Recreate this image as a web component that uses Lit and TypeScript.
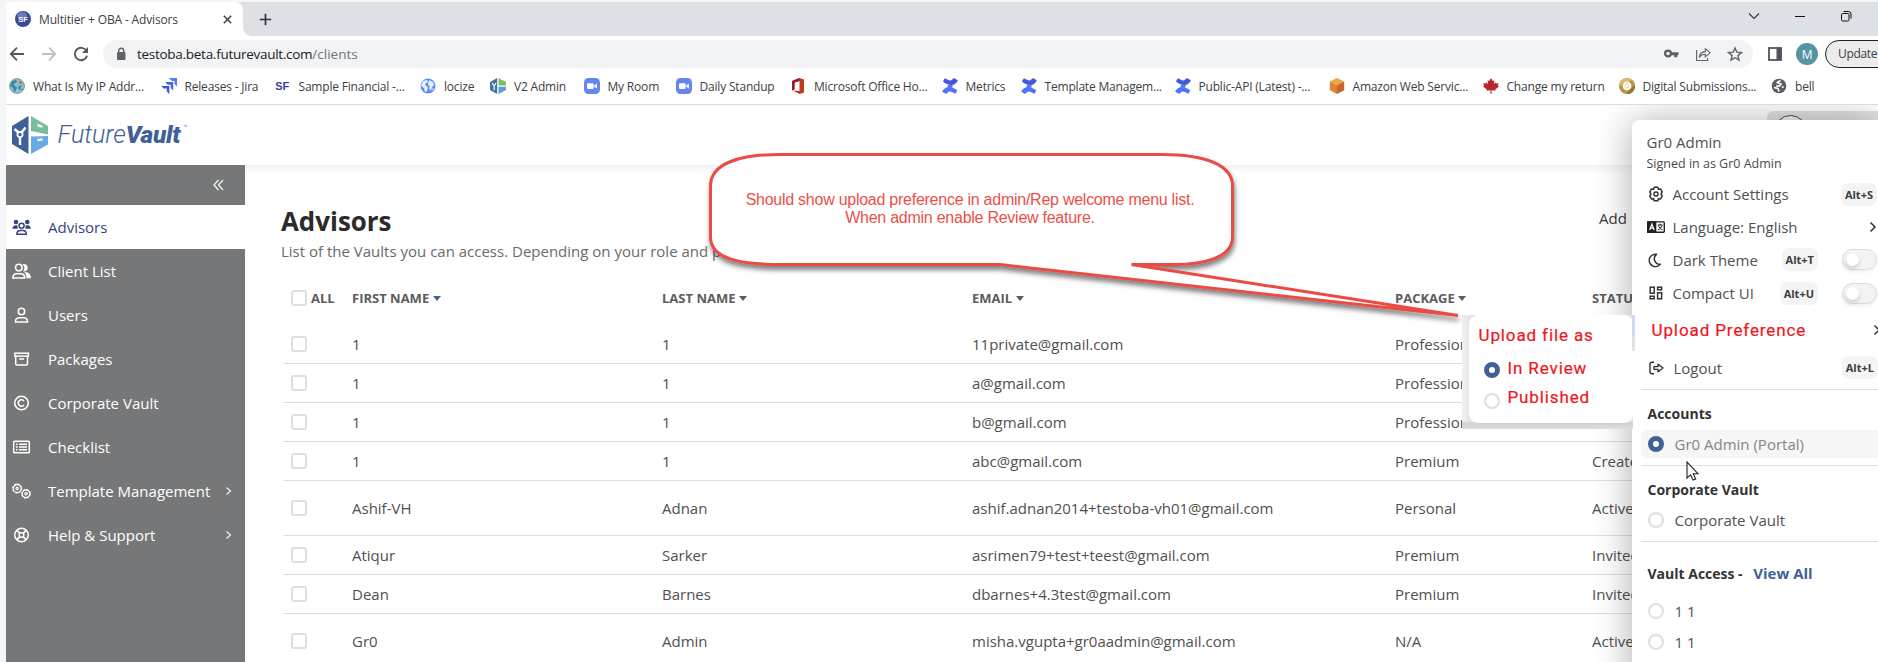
import { LitElement, html, svg, css, nothing } from "lit";
import { customElement } from "lit/decorators.js";
import { classMap } from "lit/directives/class-map.js";
import { styleMap } from "lit/directives/style-map.js";

const globe = (a: string, b: string) => svg`
  <circle cx="8" cy="8" r="7.5" fill=${a}/>
  <path d="M3 3l4-1 1 2-3 2 1 2 2 1-1 4-2 1-1-4-3-2zM9 2l4 2 1 3-2 2-1 4-2-3 1-2-2-1zM12 11l2-1-1 3z" fill=${b}/>`;
const zoomIcon = svg`
  <rect width="16" height="16" rx="4.5" fill="#6685f2"/>
  <rect x="3" y="5.3" width="6.6" height="5.6" rx="1.2" fill="#fff"/>
  <path d="M10.2 7.4L13 5.6v5L10.2 8.8z" fill="#fff"/>`;
const confluence = svg`
  <path d="M1 3.6L2.2 1q.5-.9 1.4-.4C6 2 8.500 3.300 10 1.800L11.200.6q.8-.6 1.600 0l2.600 1.400q.6.5.1 1.200C13 7 9 8.200 5 6 3.500 5.300 2 5 1 3.600z" fill="#4459d9"/>
  <path d="M15.200 12.400L14 15q-.5.900-1.400.4C10 14 7.500 12.700 6 14.200l-1.200 1.200q-.8.600-1.600 0L.6 14q-.6-.5-.1-1.200C3 9 7 7.800 11 10c1.500.700 3 1 4.200 2.400z" fill="#5273f8"/>
  <path d="M6 6.200q2 1.800 4.500.3L10.500 9.800Q7.500 8.600 5.500 9.600z" fill="#5570f0"/>`;

const FAV: Record<string, unknown> = {
  ip: svg`${globe("#8cc7e0", "#3f86a8")}<circle cx="8" cy="8" r="7.400" fill="none" stroke="#74a55c" stroke-width="1"/><circle cx="11" cy="5" r="3" fill="#a9b2b6"/><circle cx="11.500" cy="4.500" r="1" fill="#8a3d30"/>`,
  jira: svg`<path d="M8 0h8v8.500l-2.500-2.500V3H11z" fill="#5878fb"/><path d="M4.200 4h8v8.500L9.700 10V6.700H6.700z" fill="#4365ec"/><path d="M.3 8h8v8L5.800 13.500V10.600H2.600z" fill="#3c56e0"/>`,
  sf: svg`<text x="7.300" y="12" text-anchor="middle" class="sf">SF</text>`,
  loc: globe("#5b8eec", "#e6f0ff"),
  v2: svg`<path d="M7.200 0v16L0 12V4z" fill="#4a6fa5"/><path d="M8.500 0L16 4v3.500H8.500z" fill="#7cc05c"/><path d="M8.500 8.700H16V12l-7.500 4z" fill="#5d9bd8"/><path d="M2 5l2.200 3L6 5M4.200 8v4" stroke="#fff" stroke-width="1.200" fill="none"/>`,
  zoom: zoomIcon,
  office: svg`<path d="M9.500 0L2 3v9.500l2.500-1.200V4.500l5-1.500v10L2.800 12.500 9.500 16l4.500-1.500V1.500z" fill="#c23a1e"/><path d="M2 3L9.500 0v3l-5 1.500v6.800L2 12.500z" fill="#8c1e35"/>`,
  conf: confluence,
  aws: svg`<path d="M8 0l7.200 3.500L8 7.200.8 3.500z" fill="#eba745"/><path d="M.8 3.500L8 7.200V16L.8 12.300z" fill="#dd8539"/><path d="M15.200 3.500L8 7.200V16l7.200-3.700z" fill="#cc6130"/>`,
  leaf: svg`<path d="M8 0l1.700 3 1.700-.8-.5 4 2-1.900.4 1.300 2.500-.3-1 2.400 1.200.7-3.800 3 .4 1.400-4-.6V16h-1.100v-3.800l-4 .6.400-1.400-3.900-3 1.200-.7-1-2.400 2.500.3.400-1.300 2 1.900-.5-4L6.300 3z" fill="#b6272c"/>`,
  gold: svg`<circle cx="8" cy="8" r="8" fill="#b99545"/><path d="M0 8a8 8 0 0 1 13-6L8 4z" fill="#d8bd72"/><path d="M16 7a8 8 0 0 1-9 9l4-5z" fill="#97752c"/><circle cx="8" cy="8" r="4.400" fill="#fff"/><path d="M8 4.500l2 3.500a2 2 0 1 1-4 0z" fill="#fffdf5" stroke="#c9a95a" stroke-width=".6"/>`,
  bell: svg`<circle cx="8" cy="8" r="7.300" fill="#5b5f64"/><path d="M9.500 2.500L6.500 4.500l3.500 1.500-1.500 2H5M3 9.500l4 1 1 3M11 9.500l1.500-1" fill="none" stroke="#fff" stroke-width="1.700"/>`,
};

const BOOKMARKS: [string, string, number][] = [
  ["ip", "What Is My IP Addr...", 151.5],
  ["jira", "Releases - Jira", 114],
  ["sf", "Sample Financial -...", 145.500],
  ["loc", "locize", 70],
  ["v2", "V2 Admin", 93.500],
  ["zoom", "My Room", 92],
  ["zoom", "Daily Standup", 114.500],
  ["office", "Microsoft Office Ho...", 151.500],
  ["conf", "Metrics", 79],
  ["conf", "Template Managem...", 154],
  ["conf", "Public-API (Latest) -...", 154],
  ["aws", "Amazon Web Servic...", 154],
  ["leaf", "Change my return", 136],
  ["gold", "Digital Submissions...", 152.500],
  ["bell", "bell", 60],
];

const NAV: [string, string, unknown, boolean][] = [
  ["Advisors", "active", svg`<g fill="currentColor"><circle cx="4" cy="3" r="2.300"/><circle cx="15.300" cy="3" r="2.300"/><path d="M.4 9.800C.4 7.500 1.800 6.200 3.800 6.200h1.500l.5 3.600zM18.800 9.800c0-2.300-1.400-3.600-3.400-3.600h-1.500l-.5 3.600z"/></g><circle cx="9.600" cy="6.800" r="2.500" fill="none" stroke="currentColor" stroke-width="1.500"/><path d="M4.900 15.200c0-2.300 1.300-3.600 3.300-3.600h2.800c2 0 3.300 1.300 3.300 3.600z" fill="none" stroke="currentColor" stroke-width="1.500"/>`, false],
  ["Client List", "", svg`<circle cx="6.800" cy="4.500" r="3.300" fill="none" stroke="currentColor" stroke-width="1.600"/><path d="M.9 15c0-2.900 1.700-4.200 4-4.200h3.800c2.300 0 4 1.300 4 4.200z" fill="none" stroke="currentColor" stroke-width="1.600"/><path d="M10.500 1.200a3.800 3.800 0 1 1 .6 7.200 5.500 5.500 0 0 0-.6-7.200zM12.300 9.400c3.800-.3 6.600 1.600 6.600 5.900h-4.400c0-2.800-.6-4.600-2.200-5.900z" fill="currentColor"/>`, false],
  ["Users", "", svg`<circle cx="9.500" cy="4.500" r="3.200" fill="none" stroke="currentColor" stroke-width="1.500"/><path d="M3.400 15c0-2.900 1.800-4.200 4.200-4.200h3.800c2.400 0 4.200 1.300 4.200 4.200z" fill="none" stroke="currentColor" stroke-width="1.500"/>`, false],
  ["Packages", "", svg`<g fill="none" stroke="currentColor" stroke-width="1.500"><rect x="2.800" y="2.200" width="13.600" height="2.900"/><path d="M3.700 5.200v7.600q0 1.200 1.200 1.200h9.400q1.200 0 1.200-1.200V5.200M7.200 8h4.800"/></g>`, false],
  ["Corporate Vault", "", svg`<g fill="none" stroke="currentColor" stroke-width="1.600"><circle cx="9.500" cy="8" r="6.800"/><path d="M12 6A3.200 3.200 0 1 0 12 10"/></g>`, false],
  ["Checklist", "", svg`<g fill="none" stroke="currentColor" stroke-width="1.500"><rect x="1.700" y="2.200" width="15.600" height="11.600" rx=".8"/><path d="M7 5.300h8M7 8h8M7 10.700h8M4 5.300h1.600M4 8h1.600M4 10.700h1.600"/></g>`, false],
  ["Template Management", "", svg`<g fill="none" stroke="currentColor"><circle cx="5.200" cy="5.500" r="4" stroke-width="1.300"/><circle cx="5.200" cy="5.500" r="4.700" stroke-width="1" stroke-dasharray="1.850 1.850"/><circle cx="5.200" cy="5.500" r="1.200" stroke-width="1.200"/><circle cx="14" cy="10.800" r="3.800" stroke-width="1.300"/><circle cx="14" cy="10.800" r="4.500" stroke-width="1" stroke-dasharray="1.770 1.770"/><circle cx="14" cy="10.800" r="1.200" stroke-width="1.200"/></g>`, true],
  ["Help & Support", "", svg`<g fill="none" stroke="currentColor" stroke-width="1.500"><circle cx="9.500" cy="8" r="6.800"/><rect x="7.300" y="5.800" width="4.400" height="4.400" rx="1.500"/><path d="M4.700 3.200l2.900 2.900M14.300 3.200l-2.900 2.900M4.700 12.800l2.900-2.900M14.300 12.800l-2.900-2.900" stroke-width="1.700"/></g>`, true],
];

const ROWS: [string, string, string, string, string, boolean][] = [
  ["1", "1", "11private@gmail.com", "Professional", "Created", false],
  ["1", "1", "a@gmail.com", "Professional", "Created", false],
  ["1", "1", "b@gmail.com", "Professional", "Created", false],
  ["1", "1", "abc@gmail.com", "Premium", "Created", false],
  ["Ashif-VH", "Adnan", "ashif.adnan2014+testoba-vh01@gmail.com", "Personal", "Active", true],
  ["Atiqur", "Sarker", "asrimen79+test+teest@gmail.com", "Premium", "Invited", false],
  ["Dean", "Barnes", "dbarnes+4.3test@gmail.com", "Premium", "Invited", false],
  ["Gr0", "Admin", "misha.vgupta+gr0aadmin@gmail.com", "N/A", "Active", true],
];

@customElement("browser-chrome")
class BrowserChrome extends LitElement {
  static styles = css`
    :host { display: block; font: 12px "Open Sans", sans-serif; color: #3c4043; letter-spacing: -0.190px; }
    svg { display: block; flex: none; }
    .tabs { display: flex; height: 34px; background: #dee0e5; }
    .tab { box-sizing: border-box; display: flex; align-items: center; width: 237px; padding: 0 11.500px 0 9px; background: #fff; border-radius: 0 8px 0 0; }
    .tab .name { flex: 1; margin-left: 8px; letter-spacing: -0.150px; }
    .curve { width: 8px; background: radial-gradient(circle at 100% 0, #dee0e5 7.500px, #fff 8px); align-self: flex-end; height: 8px; }
    .plus { align-self: center; margin-left: 7.500px; }
    .win { display: flex; align-items: center; gap: 34px; margin-left: auto; padding: 0 26px 6px 0; }
    .bar { display: flex; align-items: center; height: 36px; padding-left: 3px; }
    .nav { display: flex; gap: 16px; margin-right: 14px; flex: none; }
    .addr { box-sizing: border-box; flex: none; display: flex; align-items: center; width: 1650px; height: 28px; border-radius: 14px; background: #f1f3f4; padding: 0 10px 0 12px; }
    .url { flex: 1; margin-left: 10px; font-size: 13.500px; letter-spacing: -0.280px; color: #202124; }
    .url i { font-style: normal; color: #70757a; letter-spacing: 0; }
    .tools { display: flex; gap: 16px; }
    .side { margin: 0 14px 0 15px; }
    .me { display: grid; place-items: center; flex: none; width: 22px; height: 22px; border-radius: 50%; background: #5494a3; color: #fff; font-size: 12px; margin-right: 7px; }
    .upd { box-sizing: border-box; width: 80px; height: 28px; border: 1px solid #202124; border-radius: 14px; background: #ececec; padding-left: 12px; line-height: 26px; flex: none; letter-spacing: -0.350px; }
    .marks { display: flex; align-items: center; height: 33px; padding: 0 0 4px 3px; border-bottom: 1px solid #d9dbdd; box-sizing: border-box; overflow: hidden; }
    .mark { display: flex; align-items: center; gap: 8px; flex: none; white-space: nowrap; }
    .sf { font: 700 11px "Liberation Sans", sans-serif; fill: #36459a; letter-spacing: 0; }
    .sfw { font: 700 7.500px "Liberation Sans", sans-serif; fill: #fff; letter-spacing: 0; }
  `;
  render() {
    return html`
      <div class="tabs">
        <div class="tab">
          <svg width="16" height="16"><circle cx="8" cy="8" r="8" fill="#3c4a96"/><ellipse cx="7" cy="4.500" rx="5" ry="3.500" fill="#7f8ccb" opacity=".7"/><text class="sfw" x="8" y="11" text-anchor="middle">SF</text></svg>
          <span class="name">Multitier + OBA - Advisors</span>
          <svg width="9" height="9"><path d="M.8.8l7.400 7.400M8.200.8L.8 8.200" stroke="#3c4043" stroke-width="1.500"/></svg>
        </div>
        <span class="curve"></span>
        <svg class="plus" width="13" height="13"><path d="M6.500.8v11.400M.8 6.500h11.400" stroke="#303236" stroke-width="1.700"/></svg>
        <div class="win">
          <svg width="12" height="12"><path d="M1 3.500l5 5 5-5" fill="none" stroke="#333" stroke-width="1.100"/></svg>
          <svg width="12" height="12"><path d="M1 6.500h10" stroke="#111" stroke-width="1"/></svg>
          <svg width="12" height="12"><rect x="1.500" y="3.500" width="7.500" height="7.500" rx="1.200" fill="none" stroke="#111"/><path d="M3.500 1.500h5q2.500 0 2.500 2.500v4.500" fill="none" stroke="#111"/></svg>
        </div>
      </div>
      <div class="bar">
        <div class="nav">
          <svg width="16" height="16"><path d="M15 8H2M8 1.700L1.800 8 8 14.300" fill="none" stroke="#54585c" stroke-width="1.800"/></svg>
          <svg width="16" height="16"><path d="M1 8H14M8 1.700L14.200 8 8 14.300" fill="none" stroke="#bcbec1" stroke-width="1.800"/></svg>
          <svg width="16" height="16"><path d="M13.500 5A6.200 6.200 0 1 0 14 9.700" fill="none" stroke="#54585c" stroke-width="1.900"/><path d="M15 1v6H9z" fill="#54585c"/></svg>
        </div>
        <div class="addr">
          <svg width="12" height="14"><rect x="2" y="5" width="8.500" height="8" rx="1" fill="#5f6368"/><path d="M3.700 5.500V3.700a2.500 2.500 0 0 1 5 0v1.800" fill="none" stroke="#5f6368" stroke-width="1.400"/></svg>
          <span class="url">testoba.beta.futurevault.com<i>/clients</i></span>
          <div class="tools">
            <svg width="16" height="16"><circle cx="5" cy="7.500" r="2.900" fill="none" stroke="#5b5f64" stroke-width="2.300"/><path d="M8 6.200h7.500v3h-1.300v2h-3v-2H8z" fill="#5b5f64"/></svg>
            <svg width="16" height="16"><g fill="none" stroke="#5f6368" stroke-width="1.100"><path d="M1.600 4v10.500h11V12"/><path d="M4.300 11.500C4.500 7.500 7 5.700 10.300 5.600V2.600l4.900 4.200-4.900 4.100V8.300C7.500 8.300 5.700 9.200 4.300 11.500z"/></g></svg>
            <svg width="16" height="16"><path d="M8 2l1.800 4.200 4.600.4-3.500 3 1.100 4.500L8 11.700l-4 2.400 1.100-4.500-3.500-3 4.600-.4z" fill="none" stroke="#5f6368" stroke-width="1.400"/></svg>
          </div>
        </div>
        <svg class="side" width="14" height="14"><rect x="1" y="1" width="12" height="12" fill="none" stroke="#50545a" stroke-width="1.800"/><rect x="8.500" y="1" width="5" height="12" fill="#50545a"/></svg>
        <span class="me">M</span>
        <span class="upd">Update</span>
      </div>
      <div class="marks">
        ${BOOKMARKS.map(([i, t, w]) => html`<div class="mark" style=${styleMap({ width: w + "px" })}><svg width="16" height="16">${FAV[i]}</svg><span>${t}</span></div>`)}
      </div>`;
  }
}

@customElement("app-menu")
class AppMenu extends LitElement {
  static styles = css`
    :host { display: block; box-sizing: border-box; padding: 10px 0 0 9px; border-radius: 8px 0 0 0; background: #fff; box-shadow: 0 2px 38px rgba(0, 0, 0, 0.330); font: 15px "Open Sans", sans-serif; color: #505152; white-space: nowrap; }
    svg { display: block; flex: none; }
    .name { padding-left: 5.500px; line-height: 25px; }
    .as { padding-left: 5.500px; font-size: 12.500px; line-height: 18px; color: #4a4a4a; margin-bottom: 5px; }
    .row { display: flex; align-items: center; height: 33px; padding: 0 1px 0 6px; }
    .row.first { height: 32px; }
    .row.grid { height: 34px; }
    .row .label { margin-left: 7.500px; flex: 1; }
    .row.wide { height: 40px; padding-right: 0; }
    .row.wide svg { margin-right: -3px; }
    .row.wide .label { margin-left: 4.500px; padding: 0 0 1px; font: 17px Roboto, sans-serif; letter-spacing: 0.900px; color: #f0141c; -webkit-text-stroke: 0.200px #f0141c; }
    .row.out { height: 35px; padding-right: 0; }
    .row.out .label { margin-left: 8.500px; }
    .keys { box-sizing: border-box; min-width: 36px; padding: 0 4px; height: 23px; line-height: 23px; border-radius: 7px; background: #f4f4f4; font-size: 11px; font-weight: 700; text-align: center; color: #3c3c3c; }
    .sw { box-sizing: border-box; width: 35px; height: 21px; margin-left: 24px; padding: 3px; border: 1px solid #dcdcdc; border-radius: 11px; background: #f3f3f3; box-shadow: 0 2px 4px rgba(0,0,0,.060); }
    .sw i { display: block; width: 13px; height: 13px; border-radius: 50%; background: #fff; box-shadow: 0 3px 5px rgba(0,0,0,.150); }
    hr { height: 1px; border: 0; margin: 0; background: #dfdfdf; }
    .end { height: 3.500px; }
    .h { padding-left: 6.500px; font-size: 14px; font-weight: 700; line-height: 20px; color: #333; }
    .h b { color: #3f6197; font-size: 15px; font-weight: 700; margin-left: 7px; }
    .pick { display: flex; align-items: center; gap: 10.500px; height: 28px; padding-left: 7px; border-radius: 7px 0 0 7px; }
    .on { background: #f6f6f6; color: #858585; }
    .dot { box-sizing: border-box; width: 16px; height: 16px; border-radius: 50%; border: 2px solid #dfdfdf; background: #fff; flex: none; }
    .on .dot { border: 5px solid #3f6197; }
    .g1 { padding: 14px 0 7px; }
    .g1 .h { padding-bottom: 6px; }
    .g2 { padding: 14px 0 7px; }
    .g2 .h { padding-bottom: 6px; }
    .g3 { padding: 21px 0; }
    .g3 .h { padding-bottom: 11.500px; }
    .g3 .pick { height: 31px; }
  `;
  row(icon: unknown, label: string, key = "", end: unknown = nothing, cls = "") {
    return html`<div class="row ${cls}">${icon ? html`<svg width="18" height="16">${icon}</svg>` : nothing}<span class="label">${label}</span>${key ? html`<span class="keys">${key}</span>` : nothing}${end}</div>`;
  }
  render() {
    const sw = html`<span class="sw"><i></i></span>`;
    const chev = html`<svg width="8" height="12"><path d="M1.500 1.500L6 6 1.500 10.500" fill="none" stroke="#333" stroke-width="1.500"/></svg>`;
    return html`
      <div class="name">Gr0 Admin</div>
      <div class="as">Signed in as Gr0 Admin</div>
      ${this.row(svg`<path d="M7.200 1.200h3.600l.6 2 2-.3 1.900 3-1.300 2.100 1.300 2.100-1.900 3-2-.3-.6 2H7.200l-.6-2-2 .3-1.900-3L4 8 2.700 5.900l1.900-3 2 .3z" fill="none" stroke="#333" stroke-width="1.500" stroke-linejoin="round"/><circle cx="9" cy="8" r="2" fill="none" stroke="#333" stroke-width="1.400"/>`, "Account Settings", "Alt+S", nothing, "first")}
      ${this.row(svg`<rect x=".7" y="2.900" width="16.600" height="10.300" rx="1" fill="#fff" stroke="#222" stroke-width="1.400"/><path d="M0 2.200h9.300v11.700H0z" fill="#222"/><path d="M2.700 11l2.200-6 2.200 6M3.400 9.200h3" fill="none" stroke="#fff" stroke-width="1.200"/><path d="M10.700 6h5M13.200 4.800V6M15 6.300c-.5 2-2 3.800-4.200 4.600M11.500 6.500c.5 1.800 2 3.500 4 4.400" fill="none" stroke="#222" stroke-width="1"/>`, "Language: English", "", chev)}
      ${this.row(svg`<path d="M9.500 2.300A6.200 6.200 0 1 0 13.300 12.300 5.600 5.600 0 0 1 9.500 2.300z" fill="none" stroke="#333" stroke-width="1.500" stroke-linejoin="round"/>`, "Dark Theme", "Alt+T", sw)}
      ${this.row(svg`<g fill="none" stroke="#333" stroke-width="1.500"><rect x="3.200" y="2.200" width="4" height="6"/><rect x="10.600" y="2.200" width="4" height="2.600"/><rect x="3.200" y="11.200" width="4" height="2.600"/><rect x="10.600" y="7.800" width="4" height="6"/></g>`, "Compact UI", "Alt+U", sw, "grid")}
      ${this.row(null, "Upload Preference", "", chev, "wide")}
      ${this.row(svg`<g fill="none" stroke="#333" stroke-width="1.400"><path d="M7 2.300H5q-2 0-2 2v7.400q0 2 2 2h2"/><path d="M7 6.600h4V4.200L16 8l-5 3.800V9.400H7z" stroke-linejoin="round"/></g>`, "Logout", "Alt+L", nothing, "out")}
      <div class="end"></div>
      <hr />
      <div class="g1"><div class="h">Accounts</div><div class="pick on"><span class="dot"></span>Gr0 Admin (Portal)</div></div>
      <hr />
      <div class="g2"><div class="h">Corporate Vault</div><div class="pick"><span class="dot"></span>Corporate Vault</div></div>
      <hr />
      <div class="g3"><div class="h">Vault Access - <b>View All</b></div><div class="pick"><span class="dot"></span>1 1</div><div class="pick"><span class="dot"></span>1 1</div></div>`;
  }
}

@customElement("app-root")
class AppRoot extends LitElement {
  static styles = css`
    :host { display: block; position: relative; width: 1878px; height: 662px; overflow: hidden; box-sizing: border-box; padding: 2px 0 0 6px; background: #f5f6f7; font: 15px "Open Sans", sans-serif; color: #505050; }
    svg { display: block; flex: none; }
    .win { height: 660px; background: #fff; display: flex; flex-direction: column; }
    .page { flex: 1; position: relative; overflow: hidden; min-height: 0; display: flex; flex-direction: column; }
    .top { display: flex; align-items: flex-start; justify-content: space-between; height: 60px; flex: none; box-shadow: 0 1px 10px rgba(0, 0, 0, 0.090); z-index: 1; background: #fff; }
    .logo { display: flex; padding: 11px 0 0 6px; }
    .word { margin: 5px 0 0 8.500px; font: italic 300 25px/28px Roboto, sans-serif; color: #3f6197; }
    .word b { font-weight: 900; font-size: 24.500px; letter-spacing: -0.350px; }
    .word sup { font-size: 7px; line-height: 0; vertical-align: 13px; margin-left: 3px; }
    .chip { width: 111px; height: 45px; margin-top: 6px; background: #e1e2e3; border-radius: 7px 0 0 7px; display: flex; align-items: flex-start; }
    .chip i { width: 33px; height: 33px; box-sizing: border-box; border: 1px solid #4a4a4a; border-radius: 50%; margin: 4px 0 0 7px; background: #f3f3f3; }
    .body { display: flex; flex: 1; min-height: 0; }
    .side { width: 239px; flex: none; background: #757779; color: #fff; z-index: 2; }
    .fold { display: flex; justify-content: flex-end; align-items: center; height: 40px; padding-right: 21px; }
    .item { display: flex; align-items: center; height: 44px; padding: 0 12px 0 6px; }
    .item span { flex: 1; margin-left: 17px; padding-bottom: 0.500px; }
    .item.active { background: #fff; color: #37427c; }
    .main { flex: 1; min-width: 0; padding: 39px 0 0 36px; white-space: nowrap; }
    .head { display: flex; justify-content: space-between; }
    h1 { margin: 0; font-size: 25.900px; line-height: 34px; color: #2b2b2b; }
    .sub { line-height: 22px; color: #6a6a6a; padding: 2px 0 1px; }
    .add { width: 279px; padding-top: 2px; line-height: 24px; color: #3a3a3a; }
    table { border-collapse: separate; border-spacing: 0; table-layout: fixed; width: 1590px; margin: 19px 0 0 3px; }
    th, td { padding: 0; text-align: left; font-weight: 400; }
    td { border-bottom: 1px solid #dddddf; }
    tr { height: 39px; }
    tr.tall { height: 55px; }
    thead tr { height: 43px; }
    th { font-size: 13px; font-weight: 700; color: #5c5c5c; padding-bottom: 11px; }
    .c0 { width: 68px; } .c1, .c2 { width: 310px; } .c3 { width: 423px; } .c4 { width: 197px; }
    .chk { display: flex; align-items: center; gap: 4px; padding-left: 7px; }
    .chk i { box-sizing: border-box; width: 16px; height: 16px; border: 2px solid #dfdfdf; border-radius: 3px; background: #fff; }
    .car { display: inline-block; border: 4px solid transparent; border-top: 5px solid #5c5c5c; border-bottom: 0; margin-left: 3.500px; vertical-align: 2px; }
    .car.sorted { border-top-color: #3f6197; }
    app-menu { position: absolute; left: 1626px; top: 15px; width: 246px; height: 600px; z-index: 3; }
    .patch { position: absolute; z-index: 4; left: 1456px; top: 210px; width: 171px; height: 114px; background: linear-gradient(180deg, transparent 106px, #d0d0d0 108px, #dedede), linear-gradient(90deg, #f1f1f1, #e6e6e6 7px); }
    .card { box-sizing: border-box; width: 164px; height: 108px; margin-left: 7px; padding: 9px 0 0 9.500px; background: #fff; border-radius: 9px; font: 17px Roboto, sans-serif; color: #f0141c; -webkit-text-stroke: 0.200px #f0141c; letter-spacing: 0.880px; line-height: 22px; }
    .opt { display: flex; align-items: center; gap: 7.500px; padding-left: 5.500px; height: 29px; }
    .opt i { box-sizing: border-box; width: 16px; height: 16px; border: 2px solid #dfdfdf; border-radius: 50%; margin-top: 8px; }
    .opt i.sel { border: 5px solid #3f6197; margin-top: 5px; }
    .opt:first-of-type { margin-top: 7px; }
    .opt span { padding-top: 1px; }
    .sliver { position: absolute; z-index: 4; left: 1626px; top: 210px; width: 3px; height: 36px; background: linear-gradient(#ccdaf4 22px, #e2e2e2 22px); }
    .note { position: absolute; z-index: 5; left: 694px; top: 38px; }
    .say { position: absolute; z-index: 6; left: 702px; top: 86px; width: 524px; text-align: center; font: 16px/17.500px "Liberation Sans", sans-serif; letter-spacing: -0.255px; color: #ec4f49; }
    .cursor { position: absolute; z-index: 7; left: 1679.500px; top: 356px; }
  `;
  render() {
    return html`
      <div class="win">
        <browser-chrome></browser-chrome>
        <div class="page">
          <div class="top">
            <div class="logo">
              <svg width="37" height="38"><path d="M16.500 0v38L0 28V10z" fill="#3f6197"/><path d="M19 0L36 10v8.500L19 15z" fill="#79bd9c"/><path d="M19 20.500l17-.5v8.500L19 38z" fill="#6aaae4"/><path d="M25.500 7.500l5 2.300v2l-5-1.300zM25.500 23l5-.8v2.300l-5 .8z" fill="#fff"/><path d="M2.500 13l4 3.500M13.500 11.500l-4 5M8 20v9" stroke="#fff" stroke-width="2.400" fill="none"/><circle cx="8" cy="18.500" r="2.600" fill="#3f6197" stroke="#fff" stroke-width="1.700"/></svg>
              <div class="word">Future<b>Vault</b><sup>™</sup></div>
            </div>
            <div class="chip"><i></i></div>
          </div>
          <div class="body">
            <div class="side">
              <div class="fold"><svg width="11" height="12"><path d="M5.500 1L1 6l4.500 5M10 1L5.500 6l4.500 5" fill="none" stroke="#f2f2f2" stroke-width="1.300"/></svg></div>
              ${NAV.map(([t, c, ic, more]) => html`<div class=${classMap({ item: true, active: c === "active" })}><svg width="19" height="16">${ic}</svg><span>${t}</span>${more ? html`<svg width="8" height="10"><path d="M1.500 1.500L5.500 5l-4 3.500" fill="none" stroke="#f2f2f2" stroke-width="1.200"/></svg>` : nothing}</div>`)}
            </div>
            <div class="main">
              <div class="head"><div><h1>Advisors</h1><div class="sub">List of the Vaults you can access. Depending on your role and permissions.</div></div><div class="add">Add</div></div>
              <table>
                <thead><tr>
                  <th class="c0"><span class="chk"><i></i>ALL</span></th>
                  <th class="c1">FIRST NAME<span class="car sorted"></span></th>
                  <th class="c2">LAST NAME<span class="car"></span></th>
                  <th class="c3">EMAIL<span class="car"></span></th>
                  <th class="c4">PACKAGE<span class="car"></span></th>
                  <th>STATUS</th>
                </tr></thead>
                <tbody>
                  ${ROWS.map(([a, b, c, d, e, tall]) => html`<tr class=${tall ? "tall" : ""}><td><span class="chk"><i></i></span></td><td>${a}</td><td>${b}</td><td>${c}</td><td>${d}</td><td>${e}</td></tr>`)}
                </tbody>
              </table>
            </div>
          </div>
          <app-menu></app-menu>
          <div class="patch"><div class="card">Upload file as
            <div class="opt"><i class="sel"></i><span>In Review</span></div>
            <div class="opt"><i></i><span>Published</span></div></div></div>
          <div class="sliver"></div>
          <svg class="note" width="780" height="190">
            <defs><filter id="s" x="-5%" y="-10%" width="110%" height="130%"><feDropShadow dx="1" dy="4" stdDeviation="2.500" flood-color="#000" flood-opacity=".5"/></filter></defs>
            <path d="M80 11.500H462C503 11.500 532.500 21 532.500 43V94C532.500 115 503 121.500 474 121.500H431.500L758 172.500 300 121.500H80C38 121.500 10.500 115 10.500 94V43C10.500 21 38 11.500 80 11.500z" fill="#fff" stroke="#eb4b45" stroke-width="3" stroke-miterlimit="1" filter="url(#s)"/>
          </svg>
          <div class="say">Should show upload preference in admin/Rep welcome menu list.<br />When admin enable Review feature.</div>
          <svg class="cursor" width="14" height="21"><path d="M1 1v16l3.600-3.200 2.500 5.300 2.600-1.200-2.400-5.200H12z" fill="#fff" stroke="#222" stroke-width="1.100"/></svg>
        </div>
      </div>`;
  }
}
